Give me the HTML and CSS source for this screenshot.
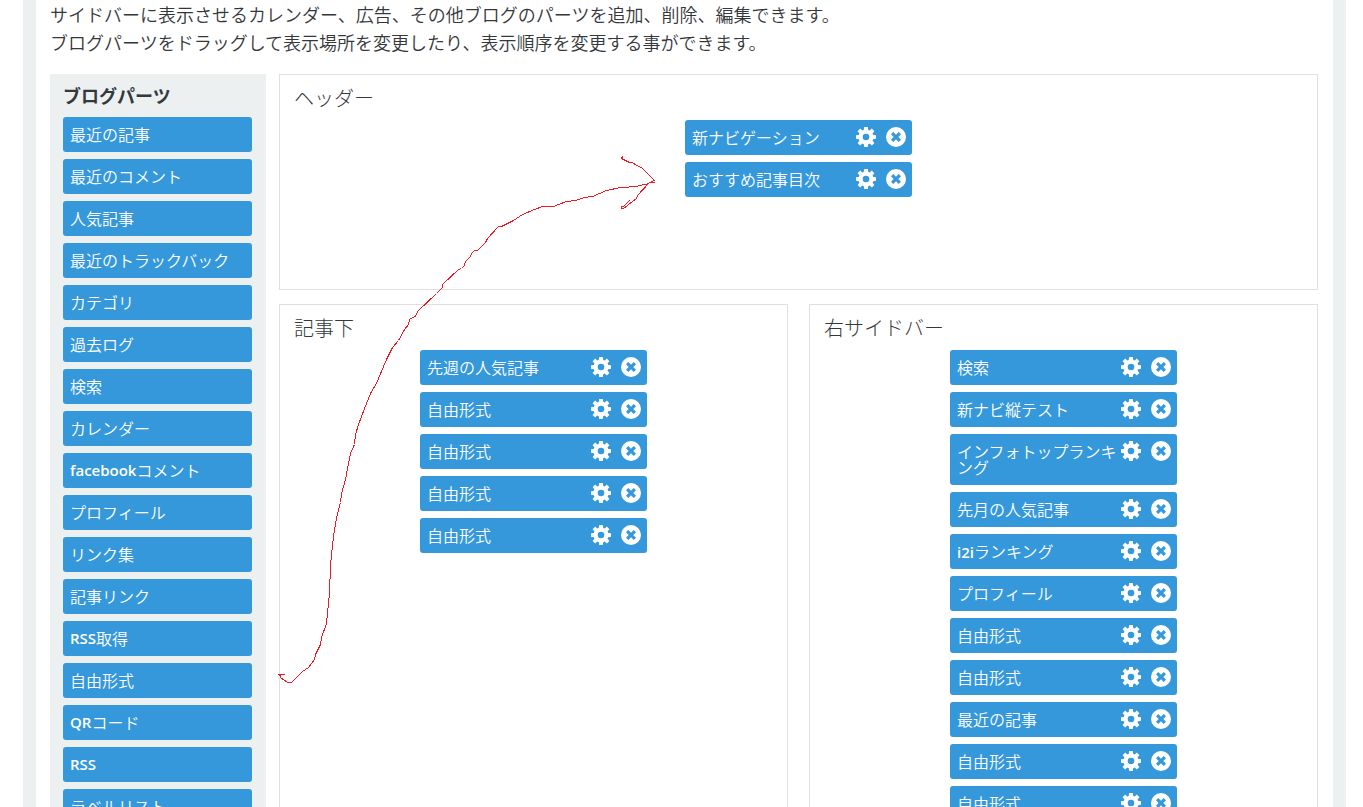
FILE: index.html
```html
<!DOCTYPE html>
<html lang="ja">
<head>
<meta charset="utf-8">
<title>ブログパーツ</title>
<link rel="stylesheet" href="styles.css">
</head>
<body>
<svg class="symbols" aria-hidden="true">
  <symbol id="gear" viewBox="0 0 20 20">
    <path fill-rule="evenodd" d="M8.200 0h3.600l.5 3 1.500.6L15.800 1.600 18.400 4.200 16.600 6.300l.6 1.600 2.800.3v3.600l-2.800.4-.6 1.500 1.800 2.200-2.500 2.500-2.200-1.800-1.500.6L11.800 20H8.200l-.4-2.800-1.500-.6-2.200 1.800L1.600 15.900l1.800-2.200-.6-1.500L0 11.800V8.200l2.800-.3.6-1.600L1.600 4.200l2.600-2.600 2.100 2L7.700 3zM10 6.700a3.300 3.300 0 1 0 0 6.600a3.300 3.300 0 1 0 0-6.600z"/>
  </symbol>
  <symbol id="close" viewBox="0 0 20 20">
    <path fill-rule="evenodd" d="M10 0a10 10 0 1 0 0 20a10 10 0 1 0 0-20zM7.300 5L10 7.700 12.700 5 15 7.300 12.300 10 15 12.700 12.700 15 10 12.300 7.300 15 5 12.700 7.700 10 5 7.300z"/>
  </symbol>
</svg>
<main class="page">
  <p class="intro">サイドバーに表示させるカレンダー、広告、その他ブログのパーツを追加、削除、編集できます。<br>ブログパーツをドラッグして表示場所を変更したり、表示順序を変更する事ができます。</p>
  <div class="workspace">
    <aside class="palette">
      <h2 class="palette-title">ブログパーツ</h2>
      <ul class="parts">
        <li class="part">最近の記事</li>
        <li class="part">最近のコメント</li>
        <li class="part">人気記事</li>
        <li class="part">最近のトラックバック</li>
        <li class="part">カテゴリ</li>
        <li class="part">過去ログ</li>
        <li class="part">検索</li>
        <li class="part">カレンダー</li>
        <li class="part"><span class="latin">facebook</span>コメント</li>
        <li class="part">プロフィール</li>
        <li class="part">リンク集</li>
        <li class="part">記事リンク</li>
        <li class="part"><span class="latin">RSS</span>取得</li>
        <li class="part">自由形式</li>
        <li class="part"><span class="latin">QR</span>コード</li>
        <li class="part"><span class="latin">RSS</span></li>
        <li class="part">ラベルリスト</li>
      </ul>
    </aside>
    <div class="areas">
      <section class="area area-wide">
        <h2 class="area-title">ヘッダー</h2>
        <ul class="parts placed">
          <li class="part"><span class="name">新ナビゲーション</span><button class="tool" aria-label="設定"><svg><use href="#gear"/></svg></button><button class="tool" aria-label="削除"><svg><use href="#close"/></svg></button></li>
          <li class="part"><span class="name">おすすめ記事目次</span><button class="tool" aria-label="設定"><svg><use href="#gear"/></svg></button><button class="tool" aria-label="削除"><svg><use href="#close"/></svg></button></li>
        </ul>
      </section>
      <section class="area">
        <h2 class="area-title">記事下</h2>
        <ul class="parts placed">
          <li class="part"><span class="name">先週の人気記事</span><button class="tool" aria-label="設定"><svg><use href="#gear"/></svg></button><button class="tool" aria-label="削除"><svg><use href="#close"/></svg></button></li>
          <li class="part"><span class="name">自由形式</span><button class="tool" aria-label="設定"><svg><use href="#gear"/></svg></button><button class="tool" aria-label="削除"><svg><use href="#close"/></svg></button></li>
          <li class="part"><span class="name">自由形式</span><button class="tool" aria-label="設定"><svg><use href="#gear"/></svg></button><button class="tool" aria-label="削除"><svg><use href="#close"/></svg></button></li>
          <li class="part"><span class="name">自由形式</span><button class="tool" aria-label="設定"><svg><use href="#gear"/></svg></button><button class="tool" aria-label="削除"><svg><use href="#close"/></svg></button></li>
          <li class="part"><span class="name">自由形式</span><button class="tool" aria-label="設定"><svg><use href="#gear"/></svg></button><button class="tool" aria-label="削除"><svg><use href="#close"/></svg></button></li>
        </ul>
      </section>
      <section class="area">
        <h2 class="area-title">右サイドバー</h2>
        <ul class="parts placed">
          <li class="part"><span class="name">検索</span><button class="tool" aria-label="設定"><svg><use href="#gear"/></svg></button><button class="tool" aria-label="削除"><svg><use href="#close"/></svg></button></li>
          <li class="part"><span class="name">新ナビ縦テスト</span><button class="tool" aria-label="設定"><svg><use href="#gear"/></svg></button><button class="tool" aria-label="削除"><svg><use href="#close"/></svg></button></li>
          <li class="part"><span class="name">インフォトップランキング</span><button class="tool" aria-label="設定"><svg><use href="#gear"/></svg></button><button class="tool" aria-label="削除"><svg><use href="#close"/></svg></button></li>
          <li class="part"><span class="name">先月の人気記事</span><button class="tool" aria-label="設定"><svg><use href="#gear"/></svg></button><button class="tool" aria-label="削除"><svg><use href="#close"/></svg></button></li>
          <li class="part"><span class="name"><span class="latin">i2i</span>ランキング</span><button class="tool" aria-label="設定"><svg><use href="#gear"/></svg></button><button class="tool" aria-label="削除"><svg><use href="#close"/></svg></button></li>
          <li class="part"><span class="name">プロフィール</span><button class="tool" aria-label="設定"><svg><use href="#gear"/></svg></button><button class="tool" aria-label="削除"><svg><use href="#close"/></svg></button></li>
          <li class="part"><span class="name">自由形式</span><button class="tool" aria-label="設定"><svg><use href="#gear"/></svg></button><button class="tool" aria-label="削除"><svg><use href="#close"/></svg></button></li>
          <li class="part"><span class="name">自由形式</span><button class="tool" aria-label="設定"><svg><use href="#gear"/></svg></button><button class="tool" aria-label="削除"><svg><use href="#close"/></svg></button></li>
          <li class="part"><span class="name">最近の記事</span><button class="tool" aria-label="設定"><svg><use href="#gear"/></svg></button><button class="tool" aria-label="削除"><svg><use href="#close"/></svg></button></li>
          <li class="part"><span class="name">自由形式</span><button class="tool" aria-label="設定"><svg><use href="#gear"/></svg></button><button class="tool" aria-label="削除"><svg><use href="#close"/></svg></button></li>
          <li class="part"><span class="name">自由形式</span><button class="tool" aria-label="設定"><svg><use href="#gear"/></svg></button><button class="tool" aria-label="削除"><svg><use href="#close"/></svg></button></li>
        </ul>
      </section>
    </div>
  </div>
</main>
<svg class="sketch" viewBox="-0.5 -0.5 700 700" aria-hidden="true">
  <polyline points="284,674 278,674 280,675 280,677 287,682 291,682 302,671 308,667 314,659 315,654 320,644 321,637 326,623 327,612 329,593 330,565 332,544 334,529 337,513 340,502 341,493 345,479 348,463 350,453 354,444 355,434 358,424 364,408 370,393 376,383 383,366 387,357 392,347 398,340 404,329 408,324 409,319 416,315 417,311 436,293 442,287 442,284 458,269 461,268 464,265 465,261 470,256 471,253 474,250 477,250 485,242 487,238 498,226 501,226 513,220 522,214 534,209 542,206 553,206 566,201 575,200 584,197 592,196 606,190 620,187 637,186 638,185 646,184 649,182 654,182"/>
  <polyline points="622,156 621,158 625,160 629,162 632,162 636,165 641,167 654,180 649,182 637,195 636,198 632,201 623,208 621,208 621,206 623,206 629,200"/>
</svg>
</body>
</html>
```
FILE: styles.css
```css
* {
  box-sizing: border-box;
}

body {
  height: 100vh;
  margin: 0;
  overflow: hidden;
  background: #fff;
  color: #34383c;
  font-family: "Noto Sans CJK JP", sans-serif;
  font-weight: 350;
}

.symbols {
  display: none;
}

.page {
  margin: 0 17px 0 23px;
  padding: 0 15px 14px 14px;
  border: solid #ecf0f1;
  border-width: 0 13px;
}

.intro {
  margin: 0 0 18px;
  font-size: 18px;
  line-height: 28px;
}

.workspace {
  display: grid;
  grid-template-columns: 216px 1fr;
  gap: 13px;
}

.palette {
  padding: 7px 14px 14px 13px;
  background: #ecf0f1;
}

.palette-title {
  margin: 0 0 8px;
  font-size: 18px;
  font-weight: 700;
  line-height: 28px;
}

.parts {
  display: flex;
  flex-direction: column;
  gap: 7px;
  margin: 0;
  padding: 0;
  list-style: none;
}

.part {
  display: flex;
  align-items: flex-start;
  min-height: 35px;
  padding: 9px 6px 10px 7px;
  border-radius: 3px;
  background: #3498db;
  color: #fff;
  font-size: 16px;
  line-height: 16px;
  cursor: move;
}

.latin {
  font-family: "Open Sans", sans-serif;
  font-size: 15px;
  font-weight: 600;
  line-height: 12px;
}

.parts:not(.placed) .latin {
  line-height: 16px;
}

.areas {
  display: grid;
  grid-template-columns: 1fr 1fr;
  grid-template-rows: auto 1fr;
  gap: 14px 21px;
}

.area {
  padding: 9px 14px 14px;
  border: 1px solid #e0e0e0;
}

.area-wide {
  grid-column: 1 / -1;
  min-height: 216px;
}

.area-title {
  margin: 0 0 8px;
  font-size: 20px;
  font-weight: 300;
  line-height: 28px;
}

.placed {
  width: 227px;
  margin: 0 auto;
}

.name {
  flex: 1;
}

.tool {
  width: 20px;
  height: 20px;
  margin: -2px 0;
  padding: 0;
  border: 0;
  background: none;
  color: inherit;
  cursor: pointer;
}

.tool + .tool {
  margin-left: 10px;
}

.tool svg {
  display: block;
  width: 20px;
  height: 20px;
  fill: currentColor;
}

.sketch {
  position: absolute;
  top: 0;
  left: 0;
  width: 700px;
  height: 700px;
  fill: none;
  stroke: #ed1c24;
  shape-rendering: crispEdges;
  pointer-events: none;
}
```
